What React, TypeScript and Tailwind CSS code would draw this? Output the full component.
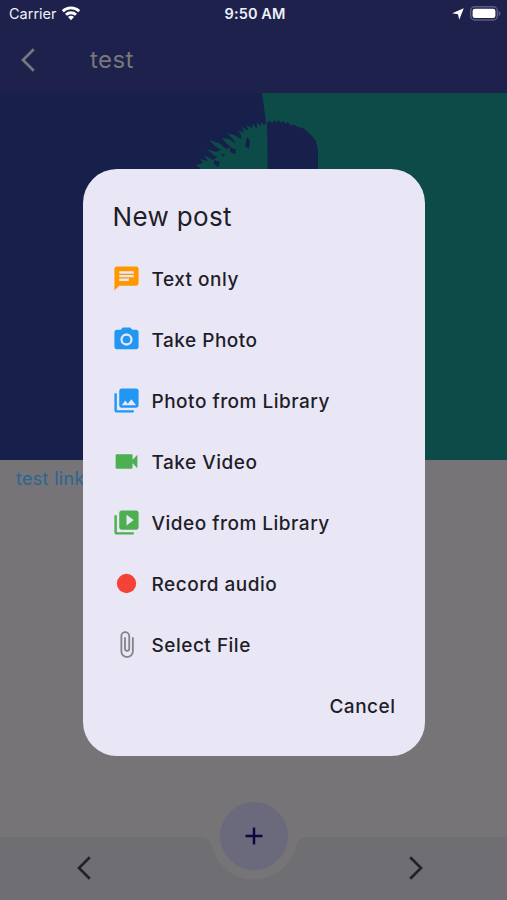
import React from 'react';
import type { IconType } from 'react-icons';
import {
  MdAttachFile,
  MdCameraAlt,
  MdChat,
  MdFiberManualRecord,
  MdPhotoLibrary,
  MdVideoLibrary,
  MdVideocam,
} from 'react-icons/md';

interface PostOption {
  label: string;
  icon: IconType;
  color: string;
}

const OPTIONS: PostOption[] = [
  { label: 'Text only', icon: MdChat, color: 'text-[#ff9800]' },
  { label: 'Take Photo', icon: MdCameraAlt, color: 'text-[#2196f3]' },
  { label: 'Photo from Library', icon: MdPhotoLibrary, color: 'text-[#2196f3]' },
  { label: 'Take Video', icon: MdVideocam, color: 'text-[#4caf50]' },
  { label: 'Video from Library', icon: MdVideoLibrary, color: 'text-[#4caf50]' },
  { label: 'Record audio', icon: MdFiberManualRecord, color: 'text-[#f44336]' },
  { label: 'Select File', icon: MdAttachFile, color: 'text-[#858388]' },
];

function Chevron({ className, flip }: { className: string; flip?: boolean }) {
  return (
    <svg viewBox="0 0 14 24" fill="none" stroke="currentColor" strokeWidth="2.7" className={className}>
      <path d={flip ? 'M1.2 1.2 12 12 1.2 22.8' : 'M12.8 1.2 2 12l10.8 10.8'} />
    </svg>
  );
}

function StatusBar() {
  return (
    <div className="grid h-7 grid-cols-3 items-center pr-[6px] pl-[9px] text-[14.5px] text-[#f0f0f8]">
      <div className="flex items-center gap-1">
        <span>Carrier</span>
        <svg viewBox="0 0 20 15" className="mb-[2px] h-[15px] w-5" fill="none" stroke="#fff" strokeWidth="2.9">
          <path d="M1.8 5.2a11.8 11.8 0 0 1 16.4 0" />
          <path d="M5 8.7a7.2 7.2 0 0 1 10 0" />
          <path d="M10 14.2 7 11.1a4.3 4.3 0 0 1 6 0z" fill="#fff" stroke="none" />
        </svg>
      </div>
      <span className="text-center font-semibold tracking-[0.1px]">9:50 AM</span>
      <div className="flex items-center justify-end gap-[6px]">
        <svg viewBox="0 0 12 12" className="h-3 w-3" fill="#fff">
          <path d="M11.8.2 7.2 11.8 6 6.2.2 5.2z" />
        </svg>
        <svg viewBox="0 0 31 15" className="mb-[2px] h-[15px] w-[31px]">
          <rect x=".7" y=".8" width="26.6" height="13.2" rx="4" fill="none" stroke="#5d5b85" strokeWidth="1.4" />
          <rect x="2.6" y="2.7" width="22.8" height="9.4" rx="2.4" fill="#fff" />
          <path d="M28.6 5v5c1.5-.5 1.8-1.5 1.8-2.5S30.1 5.5 28.6 5z" fill="#5d5b85" />
        </svg>
      </div>
    </div>
  );
}

function CoverImage() {
  return (
    <svg viewBox="0 0 507 367" className="h-[367px] w-full shrink-0">
      <path fill="#17204a" d="M0 0h507v367H0z" />
      <path fill="#0c4b48" d="M262 0h245v367H275l-7-290-2-48z" />
      <path
        fill="#0c4b48"
        d="M267 29 264 32 261 29 261 34 257 29 257 36 253 31 252 35 246 32 249 38 242 34 244 40 238 37 241 42 241 46 234 42 227 40 233 46 236 51 229 46 222 45 227 51 231 54 226 56 219 50 209 47 215 53 221 57 216 59 207 56 211 60 217 64 213 67 204 62 208 68 200 66 203 70 196 72 201 76 198 80 268 80z"
      />
      <path fill="#17204a" d="m247 44 3 4-1 8-4-3zM230 54l6 3-1 4-5-2zM214 67l6 2-2 5-4-3zM221 60l4 2-2 2z" />
      <path
        fill="#17204a"
        d="m267 29 3-1 2 2 3-3 1 3 3-3 2 3 3-2 1 3 3-2 2 3h5l3 2 5 1 5 4 4 4 4 5 2 9v23h-50z"
      />
    </svg>
  );
}

function BottomBar() {
  return (
    <div className="relative flex h-[63px] shrink-0 items-center justify-between pr-[84px] pb-[2px] pl-[77px] text-[#232227]">
      <svg viewBox="0 0 507 63" className="absolute inset-0 h-full w-full" fill="#6f6e72">
        <path d="M0 0h200c8 0 10 4 12 9a43 43 0 0 0 84 0c2-5 4-9 12-9h199v63H0z" />
      </svg>
      <Chevron className="relative h-6 w-[14px]" />
      <Chevron className="relative h-6 w-[14px]" flip />
      <button className="absolute -top-[35px] left-[220px] flex h-[68px] w-[68px] items-center justify-center rounded-full bg-[#6b6a7d]">
        <svg viewBox="0 0 18 18" className="h-[18px] w-[18px]" stroke="#09093f" strokeWidth="2.5">
          <path d="M9 .5v17M.5 9h17" />
        </svg>
      </button>
    </div>
  );
}

function NewPostDialog() {
  return (
    <div className="h-[587px] w-[342px] rounded-[34px] bg-[#e9e7f6] px-[29px] pt-[31px] text-[#1f1e28]">
      <h2 className="h-[34px] pl-px text-[26px] leading-[34px] tracking-[0.35px]">New post</h2>
      <ul className="mt-[14px]">
        {OPTIONS.map(({ label, icon: Icon, color }) => (
          <li key={label} className="flex h-[61px] items-center gap-[11px]">
            <Icon className={`h-[29px] w-[29px] shrink-0 ${color}`} />
            <span className="pt-1 text-[19px] font-medium tracking-[0.5px]">{label}</span>
          </li>
        ))}
      </ul>
      <div className="flex h-[61px] items-center justify-end">
        <button className="pt-1 text-[19px] font-medium tracking-[0.5px]">Cancel</button>
      </div>
    </div>
  );
}

export default function App() {
  return (
    <div className="relative flex h-[900px] w-[507px] flex-col overflow-hidden bg-[#767477] font-['Inter',sans-serif]">
      <div className="h-[93px] shrink-0 bg-[#1e214c]">
        <StatusBar />
        <div className="flex h-16 items-center pl-[21px] text-[#77777d]">
          <Chevron className="h-6 w-[14px]" />
          <span className="ml-[55px] text-[24px] tracking-[0.4px]">test</span>
        </div>
      </div>
      <CoverImage />
      <div className="grow px-4 pt-[5px] text-[18px] leading-7 tracking-[0.3px] text-[#2b6592]">test link</div>
      <BottomBar />
      <div className="absolute inset-0 flex justify-center pt-[169px]">
        <NewPostDialog />
      </div>
    </div>
  );
}
